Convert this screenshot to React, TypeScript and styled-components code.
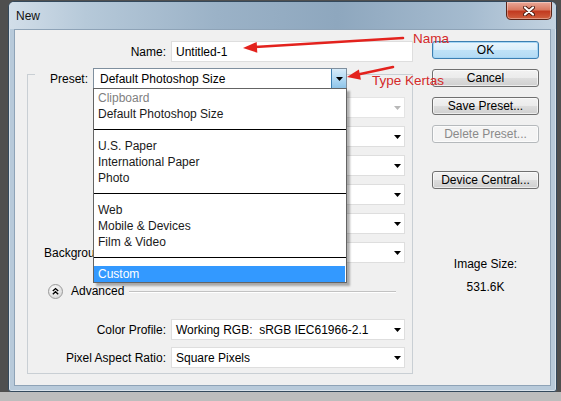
import styled, { createGlobalStyle } from "styled-components";

const GlobalStyle = createGlobalStyle`
  *, *::before, *::after { box-sizing: border-box; }
  html, body { margin: 0; padding: 0; }
  body {
    width: 561px;
    height: 401px;
    overflow: hidden;
    background: linear-gradient(to bottom, #4f4f4f 0, #4f4f4f 392px, #bdbdbd 392px);
    font-family: "Liberation Sans", Arial, sans-serif;
  }
`;

const Page = styled.div`
  position: relative;
  width: 561px;
  height: 401px;
  padding: 1px 0 0 8px;
`;

const Window = styled.div`
  width: 549px;
  height: 391px;
  border: 1px solid #34495c;
  border-radius: 6px 6px 3px 3px;
  background: #b8cada;
  display: flex;
  flex-direction: column;
  overflow: hidden;
  box-shadow: inset 0 0 0 1px rgba(255, 255, 255, 0.45);
`;

const TitleBar = styled.div`
  height: 27px;
  flex: none;
  display: flex;
  align-items: flex-start;
  justify-content: space-between;
  padding: 0 4px 0 7px;
  background: linear-gradient(
    90deg,
    #d2dee9 0%,
    #b6c9d9 14%,
    #9bb2c7 38%,
    #8ea7be 60%,
    #a5bbcf 84%,
    #c3d3e1 100%
  );
`;

const Title = styled.span`
  align-self: center;
  font-size: 12px;
  color: #111;
`;

const CloseButton = styled.div`
  width: 46px;
  height: 18px;
  border: 1px solid #5a2417;
  border-top: none;
  border-radius: 0 0 5px 5px;
  background: linear-gradient(
    to bottom,
    #eaa898 0%,
    #d97a62 45%,
    #c23a20 55%,
    #d0603f 100%
  );
  box-shadow: inset 0 0 0 1px rgba(255, 255, 255, 0.35);
  display: flex;
  align-items: center;
  justify-content: center;
`;

const Body = styled.div`
  flex: 1;
  margin: 0 5px 5px;
  border: 1px solid #8ea3b7;
  background: #f0f0f0;
  display: flex;
  gap: 19px;
  padding: 11px 0 0 12px;
  font-size: 12px;
  color: #000;
`;

const LeftColumn = styled.div`
  width: 386px;
  flex: none;
  display: flex;
  flex-direction: column;
`;

const RightColumn = styled.div`
  width: 107px;
  flex: none;
  display: flex;
  flex-direction: column;
`;

const Row = styled.div<{ $mt?: number }>`
  height: 21px;
  display: flex;
  align-items: center;
  margin-top: ${(p) => p.$mt ?? 0}px;
`;

const Label = styled.span<{ $w: number }>`
  width: ${(p) => p.$w}px;
  flex: none;
  margin-right: 5px;
  text-align: right;
  white-space: nowrap;
`;

// label cut off by the open preset menu
const CutLabel = styled.span`
  width: 65px;
  flex: none;
  margin-right: 78px;
  padding-left: 16px;
  overflow: hidden;
  white-space: nowrap;
`;

const TextBox = styled.div<{ $w: number }>`
  width: ${(p) => p.$w}px;
  height: 21px;
  flex: none;
  border: 1px solid #dedede;
  background: #fff;
  padding-left: 4px;
  display: flex;
  align-items: center;
  white-space: nowrap;
`;

const Dropdown = styled.div<{ $w: number; $disabled?: boolean; $ml?: number }>`
  width: ${(p) => p.$w}px;
  height: 21px;
  flex: none;
  margin-left: ${(p) => p.$ml ?? 0}px;
  border: 1px solid ${(p) => (p.$disabled ? "#e4e4e4" : "#dedede")};
  background: #fff;
  color: ${(p) => (p.$disabled ? "#9a9a9a" : "#000")};
  padding: 0 3px 0 4px;
  display: flex;
  align-items: center;
  justify-content: space-between;
  white-space: nowrap;
`;

const GroupBox = styled.div`
  margin-top: 12px;
  width: 386px;
  border: 1px solid #c9cfd4;
  padding: 0 7px 5px 0;
  display: flex;
  flex-direction: column;
`;

const PresetHeader = styled.div`
  margin: -7px 0 0 7px;
  align-self: flex-start;
  height: 21px;
  display: flex;
  align-items: center;
  background: #f0f0f0;
`;

const PresetSelect = styled.div`
  position: relative;
  width: 254px;
  height: 21px;
  border: 1px solid #7f8f9e;
  background: #fff;
  display: flex;
  align-items: stretch;
`;

const PresetValue = styled.span`
  flex: 1;
  padding-left: 6px;
  display: flex;
  align-items: center;
`;

const ArrowButton = styled.span`
  width: 15px;
  flex: none;
  border-left: 1px solid #3c7fb1;
  background: linear-gradient(to bottom, #d7ecfa 0%, #b3daf4 50%, #8fc4e8 100%);
  display: flex;
  align-items: center;
  justify-content: center;
`;

const Menu = styled.div`
  position: absolute;
  top: 19px;
  left: -1px;
  width: 254px;
  border: 1px solid #646464;
  background: #fff;
  padding: 1px 0 0;
  box-shadow: 3px 3px 2px rgba(0, 0, 0, 0.3);
  z-index: 10;
`;

const MenuItem = styled.div<{ $muted?: boolean; $active?: boolean }>`
  height: 16px;
  line-height: 16px;
  padding-left: 4px;
  margin-right: ${(p) => (p.$active ? 1 : 0)}px;
  color: ${(p) => (p.$active ? "#fff" : p.$muted ? "#7f7f7f" : "#1a1a1a")};
  background: ${(p) => (p.$active ? "#3399ff" : "transparent")};
  white-space: nowrap;
`;

const MenuSeparator = styled.div`
  height: 16px;
  padding-top: 7px;

  &::after {
    content: "";
    display: block;
    height: 1px;
    background: #000;
  }
`;

const AdvancedRow = styled.div`
  margin-top: 20px;
  height: 16px;
  padding-left: 20px;
  display: flex;
  align-items: center;
`;

const AdvancedToggle = styled.span`
  width: 15px;
  height: 15px;
  flex: none;
  margin-right: 8px;
  display: flex;
`;

const Rule = styled.span`
  flex: 1;
  height: 1px;
  margin: 0 9px 0 5px;
  background: #c2c2c2;
  box-shadow: 0 1px 0 #fff;
`;

const Button = styled.button<{ $default?: boolean; $mt: number }>`
  width: 107px;
  height: 18px;
  margin-top: ${(p) => p.$mt}px;
  padding: 0;
  font: inherit;
  line-height: 16px;
  color: ${(p) => (p.disabled ? "#8a8a8a" : "#000")};
  border: 1px solid
    ${(p) => (p.$default ? "#3c7fb1" : p.disabled ? "#b5b9bc" : "#707070")};
  border-radius: 3px;
  background: ${(p) =>
    p.disabled
      ? "#f4f4f4"
      : p.$default
      ? "linear-gradient(to bottom, #eaf5fc 0%, #d9eefb 50%, #bfe2f7 51%, #b3dbf4 100%)"
      : "linear-gradient(to bottom, #f2f2f2 0%, #ebebeb 50%, #dddddd 51%, #cfcfcf 100%)"};
  box-shadow: ${(p) =>
    p.$default ? "inset 0 0 0 1px #a6d6f5" : "inset 0 0 0 1px rgba(255,255,255,0.6)"};
`;

const InfoText = styled.div<{ $mt: number }>`
  margin-top: ${(p) => p.$mt}px;
  height: 16px;
  line-height: 16px;
  text-align: center;
`;

const Overlay = styled.svg`
  position: absolute;
  top: 0;
  left: 0;
  pointer-events: none;
  z-index: 20;
`;

const Note = styled.span<{ $x: number; $y: number }>`
  position: absolute;
  left: ${(p) => p.$x}px;
  top: ${(p) => p.$y}px;
  font-family: "Liberation Sans", Arial, sans-serif;
  font-size: 13.5px;
  line-height: 16px;
  color: #d42a2a;
  white-space: nowrap;
  z-index: 21;
`;

const Caret = ({ color = "#000" }: { color?: string }) => (
  <svg width="7" height="4" viewBox="0 0 7 4">
    <polygon points="0,0 7,0 3.5,4" fill={color} />
  </svg>
);

const presets = [
  { type: "item", label: "Clipboard", muted: true },
  { type: "item", label: "Default Photoshop Size" },
  { type: "sep" },
  { type: "item", label: "U.S. Paper" },
  { type: "item", label: "International Paper" },
  { type: "item", label: "Photo" },
  { type: "sep" },
  { type: "item", label: "Web" },
  { type: "item", label: "Mobile & Devices" },
  { type: "item", label: "Film & Video" },
  { type: "sep" },
  { type: "item", label: "Custom", active: true },
];

// rows hidden behind the open preset menu: only their right ends show
const hiddenRows = [
  { disabled: true, split: false },
  { disabled: false, split: true },
  { disabled: false, split: true },
  { disabled: false, split: true },
  { disabled: false, split: true },
];

const App = () => {
  return (
    <Page>
      <GlobalStyle />
      <Window>
        <TitleBar>
          <Title>New</Title>
          <CloseButton>
            <svg width="12" height="10" viewBox="0 0 12 10">
              <path d="M2 1.5 L10 8.5 M10 1.5 L2 8.5" stroke="#4a1a10" strokeWidth="4" strokeLinecap="round" />
              <path d="M2 1.5 L10 8.5 M10 1.5 L2 8.5" stroke="#fff" strokeWidth="2.2" strokeLinecap="round" />
            </svg>
          </CloseButton>
        </TitleBar>

        <Body>
          <LeftColumn>
            <Row>
              <Label $w={139}>Name:</Label>
              <TextBox $w={242}>Untitled-1</TextBox>
            </Row>

            <GroupBox>
              <PresetHeader>
                <Label $w={53}>Preset:</Label>
                <PresetSelect>
                  <PresetValue>Default Photoshop Size</PresetValue>
                  <ArrowButton>
                    <Caret />
                  </ArrowButton>
                  <Menu>
                    {presets.map((p, i) =>
                      p.type === "sep" ? (
                        <MenuSeparator key={i} />
                      ) : (
                        <MenuItem key={i} $muted={p.muted} $active={p.active}>
                          {p.label}
                        </MenuItem>
                      )
                    )}
                  </Menu>
                </PresetSelect>
              </PresetHeader>

              {hiddenRows.map((r, i) => (
                <Row key={i} $mt={8}>
                  <Label $w={138} />
                  {r.split && <TextBox $w={80} />}
                  <Dropdown $w={r.split ? 149 : 234} $ml={r.split ? 5 : 0} $disabled={r.disabled}>
                    <span />
                    <Caret color={r.disabled ? "#b8b8b8" : "#000"} />
                  </Dropdown>
                </Row>
              ))}
              <Row $mt={8}>
                <CutLabel>Background Contents:</CutLabel>
                <Dropdown $w={234}>
                  <span />
                  <Caret />
                </Dropdown>
              </Row>

              <AdvancedRow>
                <AdvancedToggle>
                  <svg width="15" height="15" viewBox="0 0 15 15">
                    <defs>
                      <radialGradient id="adv" cx="0.4" cy="0.35" r="0.7">
                        <stop offset="0" stopColor="#ffffff" />
                        <stop offset="1" stopColor="#d6d6d6" />
                      </radialGradient>
                    </defs>
                    <circle cx="7.5" cy="7.5" r="7" fill="url(#adv)" stroke="#9a9a9a" />
                    <path d="M4.8 7 L7.5 4.6 L10.2 7 M4.8 10.2 L7.5 7.8 L10.2 10.2" fill="none" stroke="#000" strokeWidth="1.4" />
                  </svg>
                </AdvancedToggle>
                <span>Advanced</span>
                <Rule />
              </AdvancedRow>

              <Row $mt={20}>
                <Label $w={138}>Color Profile:</Label>
                <Dropdown $w={234}>
                  <span>Working RGB:&nbsp; sRGB IEC61966-2.1</span>
                  <Caret />
                </Dropdown>
              </Row>
              <Row $mt={7}>
                <Label $w={138}>Pixel Aspect Ratio:</Label>
                <Dropdown $w={234}>
                  <span>Square Pixels</span>
                  <Caret />
                </Dropdown>
              </Row>
            </GroupBox>
          </LeftColumn>

          <RightColumn>
            <Button $default $mt={0}>OK</Button>
            <Button $mt={10}>Cancel</Button>
            <Button $mt={10}>Save Preset...</Button>
            <Button $mt={10} disabled>Delete Preset...</Button>
            <Button $mt={28}>Device Central...</Button>
            <InfoText $mt={67}>Image Size:</InfoText>
            <InfoText $mt={7}>531.6K</InfoText>
          </RightColumn>
        </Body>
      </Window>

      <Overlay width="561" height="401" viewBox="0 0 561 401">
        <line x1="403" y1="38" x2="255" y2="47" stroke="#e3221d" strokeWidth="2.6" strokeLinecap="round" />
        <polygon points="243,48 257.3,52.8 256.7,42" fill="#e3221d" />
        <line x1="393" y1="67" x2="358" y2="74.5" stroke="#e3221d" strokeWidth="2.6" strokeLinecap="round" />
        <polygon points="347,77 360.9,79.8 358.9,69.4" fill="#e3221d" />
      </Overlay>
      <Note $x={413} $y={31}>Nama</Note>
      <Note $x={372} $y={73}>Type Kertas</Note>
    </Page>
  );
};

export default App;
